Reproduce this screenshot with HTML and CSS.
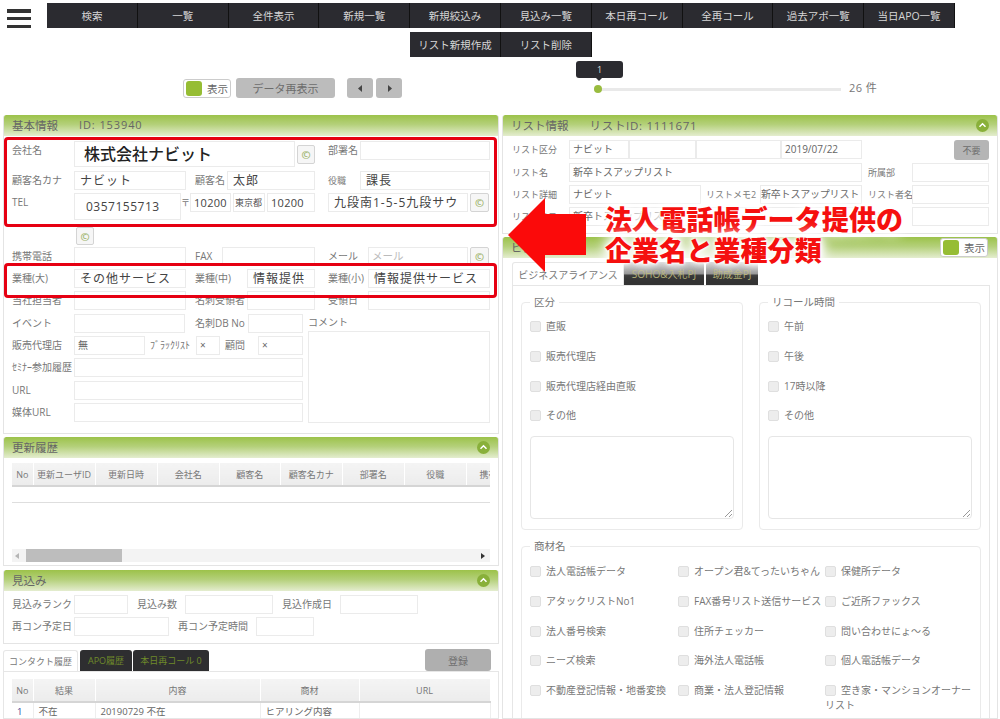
FILE: index.html
```html
<!DOCTYPE html>
<html lang="ja">
<head>
<meta charset="utf-8">
<title>顧客情報</title>
<link rel="stylesheet" href="styles.css">
</head>
<body>
<header class="topbar">
  <div class="burger"><span></span><span></span><span></span></div>
  <nav class="nav">
    <a>検索</a><a>一覧</a><a>全件表示</a><a>新規一覧</a><a>新規絞込み</a><a>見込み一覧</a><a>本日再コール</a><a>全再コール</a><a>過去アポ一覧</a><a>当日APO一覧</a>
    <a class="c5">リスト新規作成</a><a class="c6">リスト削除</a>
  </nav>
</header>

<div class="toolbar">
  <div class="toggle"><i></i><span>表示</span></div>
  <div class="gbtn reload">データ再表示</div>
  <div class="gbtn arrow ml12"><svg width="5" height="7" viewBox="0 0 5 7"><path d="M4 0v7L0 3.5z"/></svg></div>
  <div class="gbtn arrow ml3"><svg width="5" height="7" viewBox="0 0 5 7"><path d="M1 0v7l4-3.500z"/></svg></div>
  <div class="slider"><div class="tip">1</div><i class="dot"></i></div>
  <div class="count">26 件</div>
</div>

<main class="cols">
  <div class="col">
    <section class="panel h319">
      <h2 class="ph"><span>基本情報</span><span class="id">ID: 153940</span></h2>
      <div class="pb">
        <div class="row h30"><div class="lbl w62">会社名</div><div class="fld w221 h26 big">株式会社ナビット</div><div class="cp ml2 mt4 w18">©</div><div class="lbl ml13 w32">部署名</div><div class="fld w130"></div></div>
        <div class="row"><div class="lbl w62">顧客名カナ</div><div class="fld w112 val">ナビット</div><div class="lbl ml9 w32">顧客名</div><div class="fld w88 val">太郎</div><div class="lbl ml13 w32 n9">役職</div><div class="fld w130 val">課長</div></div>
        <div class="row h34"><div class="lbl w62">TEL</div><div class="fld w107 h27 val tel">0357155713</div><div class="lbl w9 n9">〒</div><div class="fld w41 zip">10200</div><div class="fld ml2 w32 tiny">東京都</div><div class="fld ml2 w48 zip">10200</div><div class="fld ml13 w140 val">九段南1-5-5九段サウ</div><div class="cp ml2 w19">©</div></div>
        <div class="row h20"><div class="cp ml64 w18 h18">©</div></div>
        <div class="row"><div class="lbl w62">携帯電話</div><div class="fld w112"></div><div class="lbl ml9 w27">FAX</div><div class="fld w93"></div><div class="lbl ml13 w40">メール</div><div class="fld w100 ph-text">メール</div><div class="cp ml2 w19">©</div></div>
        <div class="row"><div class="lbl w62">業種(大)</div><div class="fld w112 val">その他サービス</div><div class="lbl ml9 w52">業種(中)</div><div class="fld w68 val">情報提供</div><div class="lbl ml13 w40">業種(小)</div><div class="fld w122 val">情報提供サービス</div></div>
        <div class="row h23"><div class="lbl w62">当社担当者</div><div class="fld w112"></div><div class="lbl ml9 w52">名刺受領者</div><div class="fld w68"></div><div class="lbl ml13 w40">受領日</div><div class="fld w122"></div></div>
        <div class="lower">
          <div class="w291">
            <div class="row"><div class="lbl w62">イベント</div><div class="fld w111"></div><div class="lbl ml10 w53">名刺DB No</div><div class="fld w55"></div></div>
            <div class="row"><div class="lbl w62">販売代理店</div><div class="fld w71 sm">無</div><div class="lbl ml5 w46">ﾌﾞﾗｯｸﾘｽﾄ</div><div class="fld w24 sm">×</div><div class="lbl ml5 w33">顧問</div><div class="fld w45 sm">×</div></div>
            <div class="row h23"><div class="lbl w62">ｾﾐﾅｰ参加履歴</div><div class="fld w229"></div></div>
            <div class="row"><div class="lbl w62">URL</div><div class="fld w229"></div></div>
            <div class="row"><div class="lbl w62">媒体URL</div><div class="fld w229"></div></div>
          </div>
          <div class="comment ml5">
            <div class="lbl h17">コメント</div>
            <div class="fld w182 h92"></div>
          </div>
        </div>
      </div>
    </section>

    <section class="panel h129 mt3">
      <h2 class="ph"><span>更新履歴</span><svg class="chev" width="13" height="13" viewBox="0 0 13 13"><circle cx="6.500" cy="6.500" r="6.500"/><path d="M3.500 7.800l3-3 3 3"/></svg></h2>
      <div class="pb">
        <div class="tscroll">
          <table class="grid hist">
            <thead><tr><th class="w21">No</th><th class="w62">更新ユーザID</th><th class="w62">更新日時</th><th class="w62">会社名</th><th class="w61">顧客名</th><th class="w62">顧客名カナ</th><th class="w62">部署名</th><th class="w62">役職</th><th class="w62">携帯電話</th></tr></thead>
            <tbody><tr class="blank"><td></td><td></td><td></td><td></td><td></td><td></td><td></td><td></td><td></td></tr></tbody>
          </table>
        </div>
        <div class="hbar"><svg width="4" height="6" viewBox="0 0 4 6"><path d="M4 0v6L0 3z" fill="#b5b5b5"/></svg><i class="thumb"></i><svg class="end" width="4" height="6" viewBox="0 0 4 6"><path d="M0 0v6l4-3z" fill="#333"/></svg></div>
      </div>
    </section>

    <section class="panel h74 mt4">
      <h2 class="ph"><span>見込み</span><svg class="chev" width="13" height="13" viewBox="0 0 13 13"><circle cx="6.500" cy="6.500" r="6.500"/><path d="M3.500 7.800l3-3 3 3"/></svg></h2>
      <div class="pb pb4">
        <div class="row"><div class="lbl w62">見込みランク</div><div class="fld w54"></div><div class="lbl ml9 w48">見込み数</div><div class="fld w88"></div><div class="lbl ml9 w58">見込作成日</div><div class="fld w78"></div></div>
        <div class="row"><div class="lbl w62">再コン予定日</div><div class="fld w95"></div><div class="lbl ml9 w78">再コン予定時間</div><div class="fld w58"></div></div>
      </div>
    </section>

    <div class="tabs tabs-l mt6">
      <div class="tab on w75">コンタクト履歴</div>
      <div class="tab w52 ml2">APO履歴</div>
      <div class="tab w76 ml1">本日再コール 0</div>
      <div class="gbtn reg">登録</div>
    </div>
    <section class="tabbody contact">
      <table class="grid">
        <thead><tr><th class="w21">No</th><th class="w62">結果</th><th class="w165">内容</th><th class="w99">商材</th><th class="w131">URL</th></tr></thead>
        <tbody><tr><td class="link">1</td><td>不在</td><td>20190729 不在</td><td>ヒアリング内容</td><td></td></tr></tbody>
      </table>
    </section>
  </div>

  <div class="col">
    <section class="panel h119">
      <h2 class="ph"><span>リスト情報</span><span class="id2">リストID: 1111671</span><svg class="chev" width="13" height="13" viewBox="0 0 13 13"><circle cx="6.500" cy="6.500" r="6.500"/><path d="M3.500 7.800l3-3 3 3"/></svg></h2>
      <div class="pb pr">
        <div class="row h23"><div class="lbl w57">リスト区分</div><div class="fld w60 sm">ナビット</div><div class="fld w67"></div><div class="fld w85"></div><div class="fld w81 sm">2019/07/22</div><div class="gbtn nouse">不要</div></div>
        <div class="row"><div class="lbl w57">リスト名</div><div class="fld w293 sm">新卒トスアップリスト</div><div class="lbl ml6 w44">所属部</div><div class="fld w77"></div></div>
        <div class="row"><div class="lbl w57">リスト詳細</div><div class="fld w132 sm">ナビット</div><div class="lbl ml5 w54">リストメモ2</div><div class="fld w102 sm tight">新卒トスアップリスト</div><div class="lbl ml6 w44">リスト者名</div><div class="fld w77"></div></div>
        <div class="row"><div class="lbl w57">リストメモ</div><div class="fld w293 sm">新卒トスアップリスト</div><div class="lbl ml6 w44">担当者</div><div class="fld w77"></div></div>
      </div>
    </section>

    <section class="panel mt3 open">
      <h2 class="ph"><span>ビジネス内容</span><div class="toggle small"><i></i><span>表示</span></div></h2>
      <div class="pb pr">
        <div class="tabs tabs-r">
          <div class="tab on w112">ビジネスアライアンス</div>
          <div class="tab w80">SOHO&amp;入札PJ</div>
          <div class="tab w52 ml2">助成金PJ</div>
        </div>
        <div class="tabbody biz">
          <div class="fsrow">
            <fieldset class="fs fs1 w222">
              <legend>区分</legend>
              <div class="chk"><i></i>直販</div>
              <div class="chk"><i></i>販売代理店</div>
              <div class="chk"><i></i>販売代理店経由直販</div>
              <div class="chk"><i></i>その他</div>
              <div class="area"><svg width="9" height="9" viewBox="0 0 9 9"><path d="M8 1L1 8M8 5L5 8" stroke="#999" fill="none"/></svg></div>
            </fieldset>
            <fieldset class="fs fs1 w222">
              <legend>リコール時間</legend>
              <div class="chk"><i></i>午前</div>
              <div class="chk"><i></i>午後</div>
              <div class="chk"><i></i>17時以降</div>
              <div class="chk"><i></i>その他</div>
              <div class="area"><svg width="9" height="9" viewBox="0 0 9 9"><path d="M8 1L1 8M8 5L5 8" stroke="#999" fill="none"/></svg></div>
            </fieldset>
          </div>
          <fieldset class="fs goods">
            <legend>商材名</legend>
            <div class="goodsgrid">
              <div class="chk"><i></i>法人電話帳データ</div><div class="chk"><i></i>オープン君&amp;てったいちゃん</div><div class="chk"><i></i>保健所データ</div>
              <div class="chk"><i></i>アタックリストNo1</div><div class="chk"><i></i>FAX番号リスト送信サービス</div><div class="chk"><i></i>ご近所ファックス</div>
              <div class="chk"><i></i>法人番号検索</div><div class="chk"><i></i>住所チェッカー</div><div class="chk"><i></i>問い合わせにょ～る</div>
              <div class="chk"><i></i>ニーズ検索</div><div class="chk"><i></i>海外法人電話帳</div><div class="chk"><i></i>個人電話帳データ</div>
              <div class="chk"><i></i>不動産登記情報・地番変換</div><div class="chk"><i></i>商業・法人登記情報</div><div class="chk"><i></i>空き家・マンションオーナーリスト</div>
            </div>
          </fieldset>
        </div>
      </div>
    </section>
  </div>
</main>

<div class="mark mark1"></div>
<div class="mark mark2"></div>
<svg class="bigarrow" width="80" height="74" viewBox="0 0 80 74"><path d="M0 37L37 0v16h41v41H37v17z" fill="#fb0a0a"/></svg>
<div class="banner">法人電話帳データ提供の<br>企業名と業種分類</div>
</body>
</html>
```
FILE: styles.css
```css
* { box-sizing: border-box; }
html, body { margin: 0; padding: 0; height: 719px; overflow: hidden; background: #fff; }
body { font-family: "Open Sans", "Noto Sans CJK JP", sans-serif; font-size: 10px; color: #777; position: relative; }

.topbar { display: flex; align-items: flex-start; padding-top: 3px; }
.burger { width: 24px; height: 19px; margin: 6px 16px 0 7px; display: flex; flex-direction: column; justify-content: space-between; }
.burger span { height: 3.5px; background: #333; }
.nav { display: grid; grid-template-columns: repeat(10, 90.8px); grid-auto-rows: 25px; row-gap: 4px; }
.nav a { background: #2b2b30; color: #d6d6d6; font-size: 10.5px; display: flex; align-items: center; justify-content: center; border-right: 1px solid #111; }
.nav a.c5 { grid-column: 5; }
.nav a.c6 { grid-column: 6; }

.toolbar { display: flex; align-items: flex-start; height: 20px; margin-top: 21px; padding-left: 183px; }
.toggle { width: 48px; height: 19px; background: #fff; border: 1px solid #ccc; border-radius: 3px; display: flex; align-items: center; padding-left: 2px; font-size: 10.500px; color: #666; font-weight: 400; margin-top: 1px; }
.toggle i { width: 16px; height: 15px; background: #96bd34; border-radius: 3px; margin-right: 5px; }
.toggle.small { margin: 0 1px 0 auto; height: 19px; }
.gbtn { background: #bcbcbc; border-radius: 3px; color: #6c6c6c; display: flex; align-items: center; justify-content: center; font-size: 11px; }
.reload { width: 99px; height: 20px; margin-left: 5px; }
.arrow { width: 26px; height: 20px; }
.arrow svg { fill: #444; }
.ml12 { margin-left: 12px; }
.ml3 { margin-left: 3px; }
.slider { position: relative; width: 247px; height: 3px; background: #e9e9e9; margin: 10px 0 0 192px; }
.dot { position: absolute; left: 0; top: -3px; width: 8px; height: 8px; border-radius: 50%; background: #99bc3f; }
.tip { position: absolute; left: -18px; top: -27px; width: 47px; height: 17px; background: #2b2b30; border-radius: 3px; color: #ddd; font-size: 9px; display: flex; align-items: center; justify-content: center; }
.tip::after { content: ""; position: absolute; left: 20px; top: 17px; border: 3px solid transparent; border-top-color: #2b2b30; }
.count { margin: 3px 0 0 8px; font-size: 11px; color: #777; letter-spacing: .4px; line-height: 14px; }

.cols { display: flex; gap: 3px; padding-left: 3px; margin-top: 17px; }
.col { width: 496px; }
.panel { border: 1px solid #e4e4e4; border-top: 0; border-radius: 3px 3px 0 0; overflow: hidden; }
.ph { height: 21px; margin: 0 -1px; padding: 0 9px 0 9px; background: linear-gradient(#9cc24a, #b4d07a 45%, #e4edcf); font-size: 11.500px; font-weight: 400; color: #666; display: flex; align-items: center; border-radius: 3px 3px 0 0; }
.ph > span { position: relative; top: -1px; }
.ph .id { margin-left: 21px; font-size: 11px; letter-spacing: .9px; }
.ph .id2 { margin-left: 21px; letter-spacing: .7px; }
.chev { margin-left: auto; }
.chev circle { fill: #89b03a; }
.chev path { fill: none; stroke: #fff; stroke-width: 1.500; }
.pb { padding: 5px 0 0 8px; }
.pb4 { padding-top: 4px; }
.pr { padding: 4px 0 0 9px; }
.pr .row .lbl { font-size: 9px; }

.row { display: flex; align-items: flex-start; height: 22px; }
.lbl { height: 19px; line-height: 19px; white-space: nowrap; flex: none; }
.n9 { font-size: 9px; }
.fld { height: 19px; line-height: 17px; border: 1px solid #ebebeb; background: #fff; flex: none; white-space: nowrap; overflow: hidden; padding: 0 3px; color: #555; }
.big { font-size: 16px; line-height: 24px; padding-left: 9px; font-weight: 500; color: #222; }
.val { font-size: 12px; letter-spacing: 1px; padding-left: 5px; color: #444; }
.tel { line-height: 25px; padding-left: 11px; letter-spacing: .5px; }
.zip { font-size: 11px; padding-left: 3px; letter-spacing: .3px; color: #444; }
.tiny { font-size: 9px; padding: 0 1px; }
.sm { font-size: 10px; color: #666; }
.tight { padding: 0; letter-spacing: -.2px; }
.ph-text { color: #bbb; font-size: 10.500px; padding-left: 3px; }
.cp { height: 19px; border: 1px solid #d4d4d4; border-radius: 2px; background: #f6f6f6; color: #9fb56e; font-size: 11px; font-weight: 700; line-height: 17px; text-align: center; flex: none; }
.nouse { width: 35px; height: 20px; margin-left: 92px; font-size: 9px; background: #b5b5b5; }

.lower { display: flex; }
.comment { flex: none; }

.w9 { width: 9px; } .w18 { width: 18px; } .w19 { width: 19px; } .w21 { width: 21px; } .w24 { width: 24px; } .w27 { width: 27px; }
.w32 { width: 32px; } .w33 { width: 33px; } .w40 { width: 40px; } .w41 { width: 41px; } .w44 { width: 44px; } .w45 { width: 45px; } .w46 { width: 46px; }
.w48 { width: 48px; } .w52 { width: 52px; } .w53 { width: 53px; } .w54 { width: 54px; } .w55 { width: 55px; } .w57 { width: 57px; }
.w58 { width: 58px; } .w60 { width: 60px; } .w61 { width: 61px; } .w62 { width: 62px; } .w67 { width: 67px; } .w68 { width: 68px; }
.w71 { width: 71px; } .w75 { width: 75px; } .w76 { width: 76px; } .w77 { width: 77px; } .w78 { width: 78px; } .w80 { width: 80px; }
.w81 { width: 81px; } .w85 { width: 85px; } .w88 { width: 88px; } .w93 { width: 93px; } .w95 { width: 95px; } .w99 { width: 99px; }
.w100 { width: 100px; } .w102 { width: 102px; } .w107 { width: 107px; } .w111 { width: 111px; } .w112 { width: 112px; } .w122 { width: 122px; }
.w130 { width: 130px; } .w131 { width: 131px; } .w132 { width: 132px; } .w140 { width: 140px; } .w165 { width: 165px; } .w182 { width: 182px; }
.w221 { width: 221px; } .w222 { width: 222px; } .w229 { width: 229px; } .w291 { width: 291px; } .w293 { width: 293px; }
.h17 { height: 17px; line-height: 17px; } .h18 { height: 18px; } .h20 { height: 20px; } .h23 { height: 23px; } .h26 { height: 26px; } .h27 { height: 27px; }
.h30 { height: 30px; } .h34 { height: 34px; } .h74 { height: 74px; } .h92 { height: 92px; } .h119 { height: 119px; } .h129 { height: 129px; } .h319 { height: 319px; }
.ml1 { margin-left: 1px; } .ml2 { margin-left: 2px; } .ml5 { margin-left: 5px; } .ml6 { margin-left: 6px; } .ml9 { margin-left: 9px; }
.ml10 { margin-left: 10px; } .ml13 { margin-left: 13px; } .ml64 { margin-left: 64px; }
.mt3 { margin-top: 3px; } .mt4 { margin-top: 4px; } .mt6 { margin-top: 6px; }

.tscroll { width: 478px; overflow: hidden; height: 43px; }
.grid { border-collapse: collapse; table-layout: fixed; width: 478px; font-size: 9.500px; }
.hist { width: 517px; }
.grid th { font-weight: 400; font-size: 9px; height: 23px; padding: 0; text-align: center; background: linear-gradient(#f4f4f4, #ececec); border-right: 1px solid #fff; border-bottom: 2px solid #d5d5d5; color: #777; white-space: nowrap; overflow: hidden; }
.grid td { height: 17px; padding: 0 3px 0 5px; border-right: 1px solid #eee; color: #666; white-space: nowrap; }
.grid .blank td { height: 16px; border-bottom: 1px solid #dedede; border-right: 0; }
.link { color: #35489a !important; }
.hbar { margin-top: 43px; width: 478px; height: 13px; background: #f3f3f3; position: relative; display: flex; align-items: center; padding: 0 5px 0 3px; justify-content: space-between; }
.thumb { position: absolute; left: 14px; top: 0; width: 96px; height: 13px; background: #bdbdbd; }

.tabs { display: flex; height: 21px; }
.tab { height: 100%; background: #2e2e30; color: #7f9a2e; border-radius: 3px 3px 0 0; display: flex; align-items: center; justify-content: center; font-size: 10px; white-space: nowrap; }
.tabs-l .tab { font-size: 9px; color: #6f8a2a; }
.tab.on { background: #fff; color: #777; border: 1px solid #e6e6e6; border-bottom: 0; }
.tabs-l .tab.on { color: #777; }
.reg { width: 66px; height: 22px; margin: -1px 8px 0 auto; background: #afafaf; color: #6f6f6f; font-size: 10px; }
.tabbody { border: 1px solid #e6e6e6; }
.contact { padding: 7px 0 0 8px; height: 48px; overflow: hidden; }
.open { height: 482px; }
.tabs-r { height: 23px; margin-top: 0; }
.tabs-r .tab { height: 23px; }
.tabs-r .tab:not(.on) { background: linear-gradient(#a8a8a8, #8e8e8e 50%, #333 58%); color: #b0ad72; }
.biz { width: 478px; padding: 9px 8px 0 8px; height: 440px; overflow: hidden; }
.fsrow { display: flex; gap: 16px; }
.fs { margin: 0; padding: 3px 8px 0; border: 1px solid #eaeaea; border-radius: 4px; min-width: 0; }
.fs1 { height: 235px; }
.fs legend { margin-left: 0; padding: 0 4px; font-size: 10.500px; line-height: 14px; color: #777; }
.chk { height: 29.700px; padding-top: 7.300px; line-height: 15px; color: #777; font-size: 10px; }
.chk i { display: inline-block; width: 11px; height: 11px; margin-right: 5px; vertical-align: -2px; background: #ededed; border: 1px solid #dfdfdf; border-radius: 2px; }
.area { height: 83px; margin-top: 5px; border: 1px solid #e6e6e6; border-radius: 4px; display: flex; align-items: flex-end; justify-content: flex-end; }
.goods { margin-top: 9px; height: 300px; padding-top: 4px; }
.goodsgrid { display: grid; grid-template-columns: 148px 147px 147px; }

.mark { position: absolute; left: 4px; width: 493px; border: 3px solid #e60012; border-radius: 4px; }
.mark1 { top: 137px; height: 90px; }
.mark2 { top: 263px; height: 35px; }
.bigarrow { position: absolute; left: 508px; top: 198px; }
.banner { position: absolute; left: 605px; top: 204px; font-size: 27px; letter-spacing: .1px; line-height: 31px; font-weight: 900; color: #f5100f; white-space: nowrap; text-shadow: 0 0 3px #fff, 0 0 3px #fff, 0 0 6px #fff, 0 0 12px #fff, 0 0 14px #fff, 0 0 18px #fff; }
```
